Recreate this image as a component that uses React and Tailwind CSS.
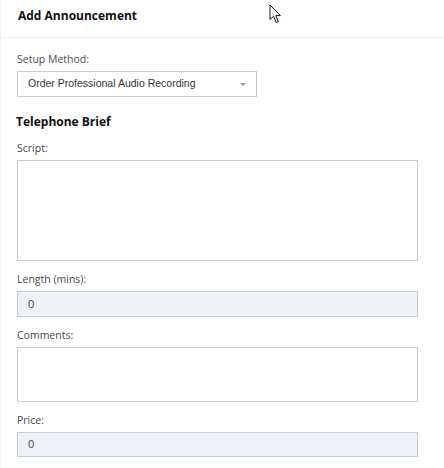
import React from "react";

const label = "block text-[10.5px] leading-[14px] text-[#4a4a4a] mb-[5px]";
const box = "block w-[401px] border border-[#c6ccd6] bg-white";

const Field = ({ title, children, last }) => (
  <div className={last ? "" : "mb-[11px]"}>
    <label className={label}>{title}</label>
    {children}
  </div>
);

const Cursor = () => (
  <svg
    className="absolute left-[268px] top-[4px]"
    width="14"
    height="20"
    viewBox="0 0 14 20"
  >
    <path
      d="M1 1 L1 15.5 L4.5 12.3 L7.2 18.5 L9.4 17.6 L6.8 11.6 L11.4 11.6 Z"
      fill="white"
      stroke="#111"
      strokeWidth="1"
      strokeLinejoin="round"
    />
  </svg>
);

export default function App() {
  return (
    <div
      className="relative w-[444px] h-[468px] bg-white border-l border-[#eef0f4] overflow-hidden"
      style={{ fontFamily: "'Open Sans', sans-serif" }}
    >
      <div className="h-[38px] border-b border-[#eceef2] pl-[17px] pt-[8px]">
        <h1 className="text-[12px] leading-[16px] font-bold text-[#111]">
          Add Announcement
        </h1>
      </div>
      <Cursor />

      <div className="pl-[16px] pt-[14px]">
        <Field title="Setup Method:">
          <div className="relative flex items-center w-[240px] h-[26px] border border-[#c6ccd6] bg-white pl-[10px]">
            <span
              className="text-[10.5px] text-[#333]"
              style={{ fontFamily: "'Liberation Sans', Arial, sans-serif" }}
            >
              Order Professional Audio Recording
            </span>
            <span className="absolute right-[10px] top-[11px] w-0 h-0 border-l-[3px] border-r-[3px] border-t-[3px] border-l-transparent border-r-transparent border-t-[#9a9a9a]" />
          </div>
        </Field>

        <h2 className="text-[12px] leading-[16px] font-bold text-[#111] mt-[17px] mb-[11px] -ml-[1px]">
          Telephone Brief
        </h2>

        <Field title="Script:">
          <textarea className={`${box} h-[101px] resize-none`} />
        </Field>

        <Field title="Length (mins):">
          <div className={`${box} h-[26px] !bg-[#eef1f6] flex items-center pl-[10px] text-[11px] text-[#444]`}>
            0
          </div>
        </Field>

        <Field title="Comments:">
          <textarea className={`${box} h-[55px] resize-none`} />
        </Field>

        <Field title="Price:" last>
          <div className={`${box} h-[25px] !bg-[#eef1f6] flex items-center pl-[10px] text-[11px] text-[#444]`}>
            0
          </div>
        </Field>
      </div>
    </div>
  );
}
